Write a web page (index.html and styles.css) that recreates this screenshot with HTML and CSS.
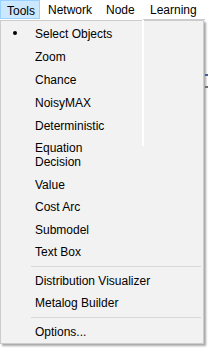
FILE: index.html
```html
<!DOCTYPE html>
<html>
<head>
<meta charset="utf-8">
<link rel="stylesheet" href="styles.css">
</head>
<body>
<div class="menubar">
  <span class="mb-item tools">Tools</span>
  <span class="mb-item network">Network</span>
  <span class="mb-item node">Node</span>
  <span class="mb-item learning">Learning</span>
</div>
<div class="menu">
  <div class="ghost"></div>
  <div class="row tall checked">Select Objects</div>
  <div class="row tall">Zoom</div>
  <div class="row tall">Chance</div>
  <div class="row tall">NoisyMAX</div>
  <div class="row tall">Deterministic</div>
  <div class="row eq">Equation</div>
  <div class="row">Decision</div>
  <div class="row">Value</div>
  <div class="row">Cost Arc</div>
  <div class="row">Submodel</div>
  <div class="row">Text Box</div>
  <div class="sep"></div>
  <div class="row">Distribution Visualizer</div>
  <div class="row">Metalog Builder</div>
  <div class="sep"></div>
  <div class="row">Options...</div>
</div>
<span class="bit bit-blue"></span>
<span class="bit bit-gray"></span>
</body>
</html>
```

FILE: styles.css
```css
html, body {
  margin: 0;
  padding: 0;
}
body {
  width: 208px;
  height: 349px;
  overflow: hidden;
  position: relative;
  background: #ffffff;
  color: #000000;
  font-family: "Liberation Sans", Arial, sans-serif;
  font-size: 12px;
}
.menubar {
  display: flex;
  height: 20px;
}
.mb-item {
  box-sizing: border-box;
  height: 20px;
  line-height: 21px;
  white-space: nowrap;
}
.tools {
  width: 40px;
  height: 19px;
  line-height: 20px;
  padding-left: 6px;
  background: #cce8ff;
  border: 1px solid #99d1ff;
}
.network {
  width: 58px;
  padding-left: 8px;
}
.node {
  width: 45px;
  padding-left: 8px;
}
.learning {
  padding-left: 7px;
}
.menu {
  position: relative;
  box-sizing: border-box;
  width: 204px;
  height: 324px;
  padding-top: 2px;
  background: #f2f2f2;
  border: 1px solid #cccccc;
  box-shadow: 2px 2px 2px rgba(0, 0, 0, 0.35);
}
.ghost {
  position: absolute;
  left: 141px;
  top: -2px;
  width: 61px;
  height: 126px;
  border-top: 1px solid #cccccc;
  border-left: 2px solid #ffffff;
}
.row {
  position: relative;
  height: 22.5px;
  line-height: 22.5px;
  padding-left: 34px;
  white-space: nowrap;
}
.row.tall {
  height: 23px;
  line-height: 23px;
}
.row.eq {
  height: 13px;
  line-height: 21px;
}
.checked::before {
  content: "";
  position: absolute;
  left: 12px;
  top: 8px;
  width: 4px;
  height: 4px;
  border-radius: 50%;
  background: #000000;
}
.sep {
  display: flex;
  align-items: center;
  height: 6px;
  padding-left: 30px;
  padding-right: 2px;
}
.sep::before {
  content: "";
  flex: 1;
  height: 1px;
  background: #d7d7d7;
}
.bit {
  position: absolute;
  left: 205px;
  width: 3px;
  height: 2px;
}
.bit-blue {
  top: 74px;
  background: #3b5fa0;
}
.bit-gray {
  top: 86px;
  background: #707070;
}
```
